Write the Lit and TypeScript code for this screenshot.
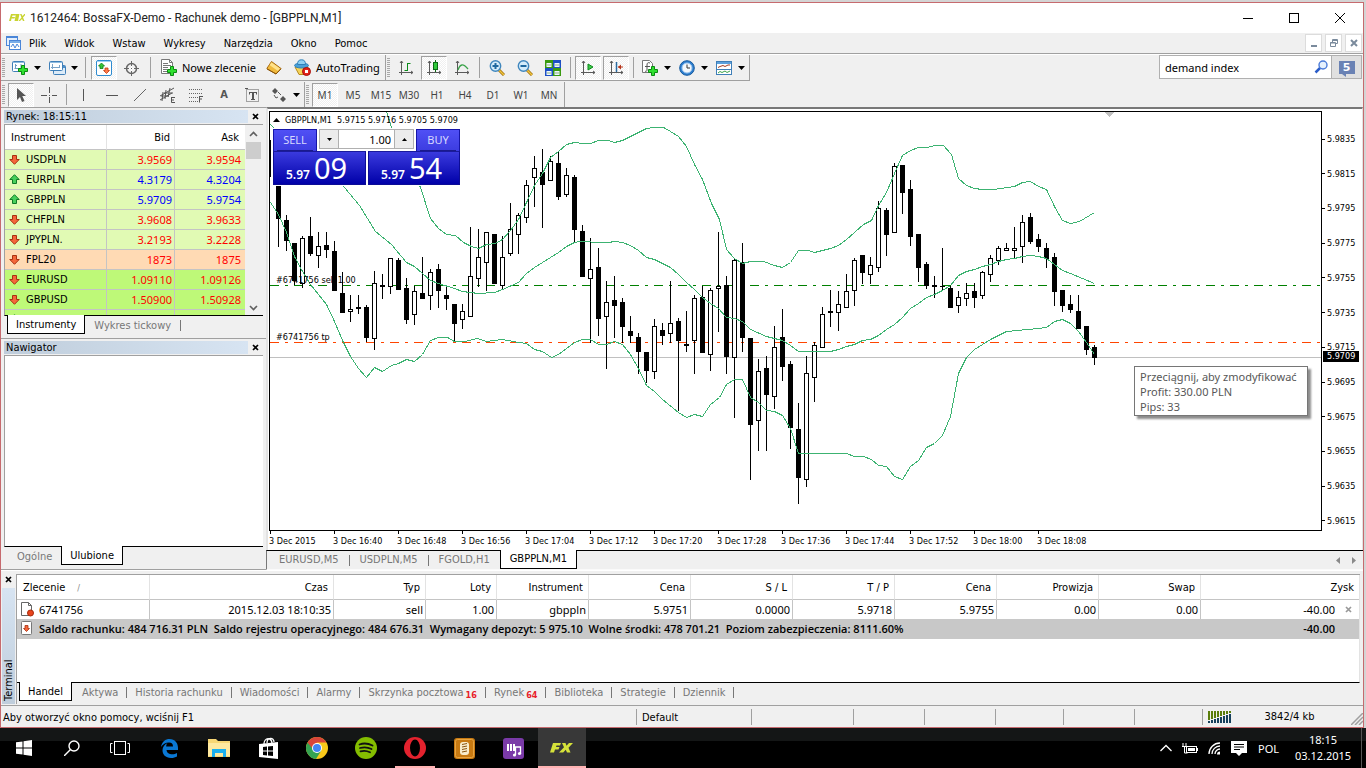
import { LitElement, html, svg, css, nothing } from "lit";
import { customElement } from "lit/decorators.js";
import { classMap } from "lit/directives/class-map.js";

/* ---------- shared glyphs ---------- */

const ico = (body: unknown, w = 16, h = 16) =>
  html`<svg width=${w} height=${h} viewBox="0 0 ${w} ${h}" aria-hidden="true">${body}</svg>`;

const axes = svg`<path d="M3.500 1v14M1 12.500h14M2 3l1.500-2L5 3M13 11l2 1.500L13 14" fill="none" stroke="#5a5a5a"/>`;

const icons = {
  newChart: ico(svg`<rect x=".5" y="1.500" width="12" height="10" rx="1" fill="#fff" stroke="#3f7fb8"/><path d="M1 2.500h11" stroke="#8fbbe0"/><path d="M3.500 4v5M2.500 8.500h7M3 5.500h2M9 4v5" stroke="#6f9cc4" fill="none"/><path d="M9.500 5.500h3v3h3v3h-3v3h-3v-3h-3v-3h3z" fill="#2fe02f" stroke="#0b8a12"/>`, 17, 16),
  profiles: ico(svg`<rect x="4.500" y="5.500" width="12" height="9" rx="1" fill="#dcebf8" stroke="#3f7fb8"/><path d="M5 7h11" stroke="#4d8fca" stroke-width="2"/><rect x=".5" y="1.500" width="13" height="9" rx="1" fill="#fff" stroke="#3f7fb8"/><path d="M1 2.500h12" stroke="#8fbbe0"/><path d="M3.500 4v5M2 7.500h9M10.500 5v3" stroke="#7aa3c8" fill="none"/>`, 17, 16),
  market: ico(svg`<rect x=".5" y=".5" width="15" height="15" rx="1.500" fill="#fff" stroke="#2f8bd0"/><path d="M1 1.500h14" stroke="#9fd0f2"/><path d="M5.500 3l3 3H7v2.500H4V6H2.500z" fill="#35c435" stroke="#0f7d16" stroke-width=".8"/><path d="M10.500 13.500l-3-3H9V8h3v2.500h1.500z" fill="#ff7a4a" stroke="#c43a10" stroke-width=".8"/>`),
  cross: ico(svg`<circle cx="7.500" cy="8.500" r="5" fill="none" stroke="#666" stroke-width="1.500"/><path d="M7.500 1v15M0 8.500h15" stroke="#666"/><path d="M7.500 6v5M5 8.500h5" stroke="#fff"/><path d="M7 8.500h1" stroke="#666"/>`),
  order: ico(svg`<path d="M.5.5h8l3 3v11H.5z" fill="#fff" stroke="#777"/><path d="M8.500.5v3h3" fill="none" stroke="#777"/><path d="M2 4.500h5M2 6.500h8M2 8.500h5M2 10.500h4M2 12.500h4" stroke="#777"/><path d="M9.500 7.500h3v3h3v3h-3v3h-3v-3h-3v-3h3z" fill="#2fe02f" stroke="#0b8a12"/>`, 16, 17),
  gold: ico(svg`<path d="M5.500 1.500L15 8.500 10 14 .8 8.500z" fill="#f0b93c" stroke="#a86a10"/><path d="M5.500 2.500L14 8.600 12 11 3.500 5z" fill="#ffe28a"/><path d="M1 9l9 5 5-5.200" fill="none" stroke="#8a5408"/>`),
  robot: ico(svg`<path d="M1 8h13l-2 7.500H5z" fill="#f4d35a" stroke="#b78a1e"/><ellipse cx="7.500" cy="6.500" rx="7" ry="2.500" fill="#4aa0d8" stroke="#2f80b8"/><path d="M3.500 5.500C3.500 2 5 .8 7.500.8s4 1.200 4 4.700z" fill="#8fd0f2" stroke="#2f80b8"/><circle cx="12.500" cy="12.500" r="4" fill="#e2231a" stroke="#a80f0a"/><rect x="11" y="11" width="3" height="3" fill="#fff"/>`, 17, 17),
  bars: ico(svg`${axes}<path d="M9.500 3v8M9.500 3.500h3M6.500 10.500h3" stroke="#0a8a1a" fill="none"/>`),
  candles: ico(svg`${axes}<path d="M9.500 0v12" stroke="#0a6a14"/><rect x="7.500" y="2.500" width="4" height="7" fill="#2fc93a" stroke="#0a6a14"/>`),
  line: ico(svg`${axes}<path d="M4 10c2-6 5-7 10-1" fill="none" stroke="#3aa34a" stroke-width="1.300"/>`),
  zoomIn: ico(svg`<path d="M10 10l5 5" stroke="#9a6a08" stroke-width="3"/><path d="M10 10l5 5" stroke="#f2c53c" stroke-width="1.500"/><circle cx="6.500" cy="6" r="5.200" fill="#d4ecfb" stroke="#3f86bd" stroke-width="1.400"/><path d="M6.500 3v6M3.500 6h6" stroke="#1f68a0" stroke-width="2"/>`),
  zoomOut: ico(svg`<path d="M10 10l5 5" stroke="#9a6a08" stroke-width="3"/><path d="M10 10l5 5" stroke="#f2c53c" stroke-width="1.500"/><circle cx="6.500" cy="6" r="5.200" fill="#d4ecfb" stroke="#3f86bd" stroke-width="1.400"/><path d="M3.500 6h6" stroke="#1f68a0" stroke-width="2"/>`),
  tile: ico(svg`<rect width="8" height="8" fill="#3a9a10"/><rect x="8" width="8" height="8" fill="#1d4fc4"/><rect y="8" width="8" height="8" fill="#1d4fc4"/><rect x="8" y="8" width="8" height="8" fill="#3a9a10"/><path d="M1.500 3h5v4h-5zM9.500 3h5v4h-5zM1.500 11h5v4h-5zM9.500 11h5v4h-5z" fill="#eef6ff"/><path d="M2 5h4M10 5h4M2 13h4M10 13h4" stroke="#8bb27a"/>`),
  scroll: ico(svg`${axes}<path d="M8 4v6l5-3z" fill="#3ecb4a" stroke="#0a8a1a"/>`),
  shift: ico(svg`${axes}<path d="M8.500 2v10" stroke="#2a6aa0" stroke-width="1.500"/><path d="M10 7h5" stroke="#b5341a"/><path d="M13 4.500L10 7l3 2.500z" fill="#b5341a"/>`),
  indicator: ico(svg`<path d="M.5.500h7l3 3v9H.5z" fill="#fff" stroke="#777"/><path d="M8 3C6 2 5 3 5 5v5c0 1-1 2-2 1M3 6.500h5" fill="none" stroke="#555"/><path d="M9.500 6.500h3v3h3v3h-3v3h-3v-3h-3v-3h3z" fill="#2fe02f" stroke="#0b8a12"/>`),
  clock: ico(svg`<circle cx="8" cy="8" r="7.300" fill="#2f7fd0" stroke="#155a9e"/><circle cx="8" cy="8" r="5" fill="#f4f8fc" stroke="#9cc6ee"/><path d="M8 4.500V8h3" fill="none" stroke="#333"/>`),
  template: ico(svg`<rect x=".5" y="1.500" width="15" height="13" fill="#fff" stroke="#3f7fb8"/><path d="M1 3h14" stroke="#5ba0dc" stroke-width="2"/><path d="M1 9.500h14" stroke="#3f7fb8"/><path d="M2 7.500l2-1 3-1 2 1 3-1.500 2 0" fill="none" stroke="#a03a20"/><path d="M2 13l2-1.500 2 1 3-1.500 2 1.500 3-1.500" fill="none" stroke="#3aa34a"/>`),
  pointer: ico(svg`<path d="M4 1v12l3-3 2 5 2.500-1-2.200-5H13z" fill="#555"/>`),
  hair: ico(svg`<path d="M8.500 0v6M8.500 10v6M0 8.500h6M11 8.500h5" stroke="#555"/><path d="M8 8.500h1" stroke="#555"/>`),
  vline: ico(svg`<path d="M7.500 2v12" stroke="#555"/>`),
  hline: ico(svg`<path d="M2 8.500h12" stroke="#555"/>`),
  diag: ico(svg`<path d="M2 14L14 2" stroke="#666"/>`),
  channel: ico(svg`<path d="M0 9L14 1M0 13L12 6M3 5l-1 9M6 3l-1 9M10 1L8 10M1 9h8M4 6h9" stroke="#555" fill="none"/><path d="M11.500 10v5.500M11.500 10.500H15M11.500 13H14M11.500 15.500H15" stroke="#555" fill="none"/>`),
  fib: ico(svg`<path d="M1 2.500h13M1 6.500h13M1 10.500h9M1 14.500h9" stroke="#666" stroke-dasharray="1 1"/><path d="M11.500 9v6.500M11.500 9.500H15M11.500 12H14" stroke="#555" fill="none"/>`),
  frameT: ico(svg`<rect x="2.500" y="2.500" width="12" height="12" fill="none" stroke="#555" stroke-dasharray="1 1"/><path d="M5 5.500h8M8.500 5v8M7 12.500h4M5.500 5v2.500M12.500 5v2.500" stroke="#555" fill="none"/><path d="M8 5h2v8H8z" fill="#555"/><path d="M1 1.500h3" stroke="#555"/>`),
  shapes: ico(svg`<path d="M4 1l3 3-3 3-3-3zM12 9l3 3-3 3-3-3z" fill="#555"/><path d="M3 8l2 3 2-1M7 5l3 3" stroke="#555" fill="none"/>`),
  appMenu: ico(svg`<rect x=".5" y=".5" width="11" height="9" fill="#e4effc" stroke="#4a86d8"/><path d="M1 1.500h10" stroke="#4a86d8"/><rect x="3.500" y="4.500" width="11" height="9" fill="#fff" stroke="#4a86d8"/><path d="M4 6h10" stroke="#7aaee8" stroke-width="2"/><path d="M5 11l2-3 2 4 2-4 2 3" fill="none" stroke="#4a86d8"/>`, 15, 14),
  upArrow: ico(svg`<path d="M5.500.7l4.700 4.800H7.500v4h-4v-4H.8z" fill="#46cf5a" stroke="#0f7a26" stroke-linejoin="round"/>`, 11, 11),
  downArrow: ico(svg`<path d="M5.500 10.300L.8 5.500h2.700v-4h4v4h2.700z" fill="#f4663a" stroke="#a83010" stroke-linejoin="round"/>`, 11, 11),
  cross8: ico(svg`<path d="M1 1l5 5M6 1L1 6" stroke="currentColor" stroke-width="1.700"/>`, 7, 7),
};

/* ---------- window caption and menu ---------- */

@customElement("window-header")
class WindowHeader extends LitElement {
  static styles = css`
    :host { display: block; }
    button { font: inherit; border: 0; padding: 0; background: none; display: flex; align-items: center; justify-content: center; }
    .caption { display: flex; height: 30px; background: #fff; align-items: center; }
    .logo { margin: 0 5px 0 8px; display: flex; }
    h1 { flex: 1; margin: 0; font: 400 12px/30px "Roboto", sans-serif; color: #222; }
    .caption button { width: 46px; height: 30px; }
    .menu { display: flex; height: 20px; align-items: center; border-bottom: 1px solid #a0a0a0; padding-left: 5px; }
    .menu .items { display: flex; flex: 1; margin: 0 0 0 8px; gap: 18px; font-size: 11px; }
    .child { box-sizing: border-box; width: 17px; height: 18px; border: 1px solid #dcdcdc; background: #fff; color: #7a8a9c; }
    .kids { display: flex; gap: 3px; padding-right: 1px; }
  `;
  render() {
    return html`
      <header class="caption">
        <span class="logo">${ico(svg`<path d="M2 0h5l-.5 1.500H3.500L3 3h3l-.5 1.500h-3L2 7H0zM7 0h3.500L9 7H5.500zM11 0h1.500l1 2 1.800-2H17l-3 3.400L15.500 7H14l-1-2-2 2H9.500l3-3.500z" fill="#c9d430"/>`, 16, 8)}</span>
        <h1>1612464: BossaFX-Demo - Rachunek demo - [GBPPLN,M1]</h1>
        <button aria-label="Minimalizuj">${ico(svg`<path d="M0 5.500h10" stroke="#000"/>`, 10, 10)}</button>
        <button aria-label="Maksymalizuj">${ico(svg`<rect x=".5" y=".5" width="9" height="9" fill="none" stroke="#000"/>`, 10, 10)}</button>
        <button aria-label="Zamknij">${ico(svg`<path d="M0 0l10 10M10 0L0 10" stroke="#000"/>`, 10, 10)}</button>
      </header>
      <nav class="menu">
        ${icons.appMenu}
        <div class="items">
          ${["Plik", "Widok", "Wstaw", "Wykresy", "Narzędzia", "Okno", "Pomoc"].map((t) => html`<button>${t}</button>`)}
        </div>
        <div class="kids">
          <button class="child" aria-label="Minimalizuj wykres">${ico(svg`<path d="M1 7h6" stroke="currentColor" stroke-width="2"/>`, 8, 8)}</button>
          <button class="child" aria-label="Przywróć wykres">${ico(svg`<path d="M2.500 3V.5h5v4H6M.5 3.500h5v4h-5zM2 1.500h5M0 4h5" fill="none" stroke="currentColor"/>`, 8, 8)}</button>
          <button class="child" aria-label="Zamknij wykres">${ico(svg`<path d="M1 1l6 6M7 1L1 7" stroke="currentColor" stroke-width="2"/>`, 8, 8)}</button>
        </div>
      </nav>
    `;
  }
}

/* ---------- toolbars ---------- */

@customElement("tool-bars")
class ToolBars extends LitElement {
  static styles = css`
    :host { display: block; border-top: 1px solid #fff; }
    .row { display: flex; justify-content: space-between; }
    .bar { display: flex; height: 25px; }
    .top .bar { border-bottom: 1px solid #a0a0a0; margin-bottom: 1px; }
    .group { display: flex; align-items: center; gap: 2px; padding: 0 2px 0 1px; border-right: 1px solid #a0a0a0; }
    .grip { width: 3px; height: 19px; margin-right: 1px; background: repeating-linear-gradient(#a8a8a8 0 1px, #f0f0f0 1px 2px); }
    .sep { width: 1px; height: 21px; margin: 0 2px; background: #a0a0a0; }
    .sep.wide { margin: 0 3px; }
    button { font: 11px "DejaVu Sans Condensed", "DejaVu Sans", sans-serif; color: #000; border: 0; padding: 0; background: none; box-sizing: border-box; width: 26px; height: 24px; display: flex; align-items: center; justify-content: center; }
    .split { width: 35px; padding: 0 2px 0 4px; justify-content: space-between; }
    .pressed { background: repeating-conic-gradient(#fff 0 25%, #f0f0f0 0 50%) 0 0 / 2px 2px; border: 1px solid; border-color: #a0a0a0 #fff #fff #a0a0a0; }
    .text { width: auto; gap: 5px; padding: 0 3px 0 5px; font: 11px "Noto Sans", sans-serif; white-space: nowrap; }
    .tf { color: #444; font: 10px "Noto Sans", sans-serif; padding-top: 1px; }
    .letter { color: #555; font-weight: 700; font-size: 11px; }
    .find { display: flex; height: 24px; margin-right: 1px; box-sizing: border-box; border: 1px solid #b0b0b0; background: #fff; }
    .find input { width: 146px; border: 0; padding: 0 0 0 5px; outline: 0; background: none; font: 11px "Noto Sans", sans-serif; color: #000; }
    .find button { width: 20px; height: 22px; }
    .find .badge { width: 30px; background: #e0e0e0; border-left: 1px solid #b0b0b0; }
    .bubble { position: relative; display: block; width: 16px; background: #6a82b4; color: #fff; font: 700 11px/13px "DejaVu Sans", sans-serif; text-align: center; }
    .bubble::after { content: ""; position: absolute; left: 3px; top: 13px; border: solid transparent; border-width: 0 0 3px 4px; border-top: 3px solid #6a82b4; border-bottom: 0; }
  `;
  btn(label: string, body: unknown, cls: Record<string, boolean> = {}) {
    return html`<button class=${classMap(cls)} aria-label=${label}>
      ${body}${cls.split ? ico(svg`<path d="M0 0h7L3.500 4z" fill="#000"/>`, 7, 4) : nothing}
    </button>`;
  }
  render() {
    const sep = html`<span class="sep"></span>`;
    const wide = html`<span class="sep wide"></span>`;
    const on = { pressed: true };
    const split = { split: true };
    return html`
      <div class="row top">
        <div class="bar">
          <div class="group">
            <span class="grip"></span>
            ${this.btn("Nowy wykres", icons.newChart, split)}${this.btn("Profile", icons.profiles, split)}${wide}
            ${this.btn("Rynek", icons.market, on)}${this.btn("Okno danych", icons.cross)}${wide}
            <button class="text">${icons.order}<span>Nowe zlecenie</span></button>
            ${this.btn("MetaEditor", icons.gold)}
            <button class="text">${icons.robot}<span>AutoTrading</span></button>
          </div>
          <div class="group">
            <span class="grip"></span>
            ${this.btn("Słupki", icons.bars)}${this.btn("Świece", icons.candles, on)}${this.btn("Linia", icons.line)}${sep}
            ${this.btn("Powiększ", icons.zoomIn)}${this.btn("Pomniejsz", icons.zoomOut)}${this.btn("Rozmieść okna", icons.tile)}${sep}
            ${this.btn("Autoprzewijanie", icons.scroll, on)}${this.btn("Przesunięcie", icons.shift, on)}${sep}
            ${this.btn("Wskaźniki", icons.indicator, split)}${this.btn("Okresy", icons.clock, split)}${this.btn("Szablony", icons.template, split)}
          </div>
        </div>
        <form class="find" @submit=${(e: Event) => e.preventDefault()}>
          <input type="text" aria-label="Szukaj" .value=${"demand index"} />
          <button aria-label="Szukaj">${ico(svg`<path d="M7 7L1.500 12.500" stroke="#2a5cc8" stroke-width="2.500"/><circle cx="9" cy="5" r="4" fill="#e6f1fd" stroke="#4a7ad8" stroke-width="1.400"/>`, 14, 14)}</button>
          <button class="badge" aria-label="Wiadomości"><span class="bubble">5</span></button>
        </form>
      </div>
      <div class="row">
        <div class="bar">
          <div class="group">
            <span class="grip"></span>
            ${this.btn("Kursor", icons.pointer, on)}${this.btn("Celownik", icons.hair)}${sep}
            ${this.btn("Linia pionowa", icons.vline)}${this.btn("Linia pozioma", icons.hline)}${this.btn("Linia trendu", icons.diag)}
            ${this.btn("Kanał", icons.channel)}${this.btn("Fibonacci", icons.fib)}
            ${this.btn("Tekst", html`<span class="letter">A</span>`)}${this.btn("Etykieta", icons.frameT)}
            ${this.btn("Strzałki", icons.shapes, split)}
          </div>
          <div class="group">
            <span class="grip"></span>
            ${["M1", "M5", "M15", "M30", "H1", "H4", "D1", "W1", "MN"].map(
              (t, i) => html`<button class=${classMap({ tf: true, pressed: i === 0 })}>${t}</button>`
            )}
          </div>
        </div>
      </div>
    `;
  }
}

/* ---------- left side panels ---------- */

const quotes: [string, string, string, boolean, string][] = [
  ["USDPLN", "3.9569", "3.9594", false, "pln"],
  ["EURPLN", "4.3179", "4.3204", true, "pln"],
  ["GBPPLN", "5.9709", "5.9754", true, "pln"],
  ["CHFPLN", "3.9608", "3.9633", false, "pln"],
  ["JPYPLN.", "3.2193", "3.2228", false, "pln"],
  ["FPL20", "1873", "1875", false, "fut"],
  ["EURUSD", "1.09110", "1.09126", false, "usd"],
  ["GBPUSD", "1.50900", "1.50928", false, "usd"],
  ["", "", "", true, "usd"],
];

const tabStyles = css`
  .tabs { display: flex; align-items: flex-start; font-size: 11px; color: #777; }
  .tabs button { font: inherit; color: inherit; border: 0; background: none; height: 18px; padding: 0 9px; line-height: 19px; white-space: nowrap; }
  .tabs .active { color: #000; background: #fff; border: 1px solid #000; border-top: 0; height: 19px; margin-top: -1px; padding: 0 8px; }
  .tabs .bar { width: 1px; height: 11px; margin-top: 4px; background: #777; }
`;

@customElement("side-panels")
class SidePanels extends LitElement {
  static styles = [tabStyles, css`
    :host { display: flex; flex-direction: column; width: 265px; flex: none; }
    .panel { border-top: 1px solid #a0a0a0; display: flex; flex-direction: column; padding: 2px 3px 0; }
    .market { height: 228px; flex: none; }
    .navigator { flex: 1; min-height: 0; border-bottom: 1px solid #a0a0a0; }
    .title { display: flex; align-items: center; height: 13px; margin-bottom: 1px; }
    h2 { flex: 1; margin: 0; padding-left: 2px; font: 400 11px/13px "DejaVu Sans Condensed", "DejaVu Sans", sans-serif; background: linear-gradient(90deg, #bfcddb, #d7e4f2); }
    .close { border: 0; padding: 0; background: none; display: flex; width: 15px; justify-content: center; color: #000; }
    .body { border-top: 1px solid #a0a0a0; border-left: 1px solid #a0a0a0; background: #fff; border-bottom: 1px solid #000; overflow: hidden; display: flex; }
    .market .body { height: 190px; }
    .navigator .body { flex: 1; }
    table { flex: 1; border-collapse: separate; border-spacing: 0; table-layout: fixed; }
    tr { height: 20px; }
    thead tr { height: 25px; }
    th, td { box-sizing: border-box; padding: 0 2px 0 0; text-align: right; font-weight: 400; border-right: 1px solid #c4c4c4; border-bottom: 1px solid #c4c4c4; height: 20px; }
    th { border-right-color: #e3e3e3; padding-right: 4px; height: 25px; }
    th:first-child { text-align: left; padding-left: 6px; }
    th:last-child { border-right: 0; padding-right: 6px; }
    td:last-child { border-right: 0; padding-right: 4px; }
    td:first-child { text-align: left; padding-left: 4px; }
    .sym { display: flex; align-items: center; gap: 6px; }
    .pln { background: #e1fab4; }
    .fut { background: #ffdab4; }
    .usd { background: #bef978; }
    .num { font-family: "Noto Sans", sans-serif; color: #f00; padding-bottom: 1px; }
    .rise { color: #00f; }
    .scroll { width: 18px; background: #f0f0f0; display: flex; flex-direction: column; align-items: center; padding: 6px 2px 4px 0; box-sizing: border-box; }
    .thumb { width: 15px; height: 17px; background: #cdcdcd; margin: 5px 0 auto; }
    .c1 { width: 102px; }
    .c2 { width: 68px; }
    .tabs { padding: 0 0 0 3px; }
    .navigator .tabs { height: 22px; padding-left: 4px; }
  `];
  render() {
    return html`
      <section class="panel market">
        <div class="title"><h2>Rynek: 18:15:11</h2><button class="close" aria-label="Zamknij">${icons.cross8}</button></div>
        <div class="body">
          <table>
            <colgroup><col class="c1" /><col class="c2" /><col /></colgroup>
            <thead><tr><th>Instrument</th><th>Bid</th><th>Ask</th></tr></thead>
            <tbody>
              ${quotes.map(([s, b, a, up, cls]) => html`<tr class=${cls}>
                <td><span class="sym">${up ? icons.upArrow : icons.downArrow}${s}</span></td>
                <td class=${classMap({ num: true, rise: up })}>${b}</td>
                <td class=${classMap({ num: true, rise: up })}>${a}</td>
              </tr>`)}
            </tbody>
          </table>
          <div class="scroll">
            ${ico(svg`<path d="M1 5l3.500-3.500L8 5" fill="none" stroke="#606060" stroke-width="1.600"/>`, 9, 6)}
            <span class="thumb"></span>
            ${ico(svg`<path d="M1 1l3.500 3.500L8 1" fill="none" stroke="#606060" stroke-width="1.600"/>`, 9, 6)}
          </div>
        </div>
        <div class="tabs"><button class="active">Instrumenty</button><button>Wykres tickowy</button><span class="bar"></span></div>
      </section>
      <section class="panel navigator">
        <div class="title"><h2>Nawigator</h2><button class="close" aria-label="Zamknij">${icons.cross8}</button></div>
        <div class="body"></div>
        <div class="tabs"><button>Ogólne</button><button class="active">Ulubione</button></div>
      </section>
    `;
  }
}

/* ---------- price chart ---------- */

/* One candle per minute: high, body top, body bottom, low, rising flag. */
const candles: number[][] = [
  [180,180,219,247,0],[215,220,241,251,0],[243,243,281,285,0],[236,238,284,288,1],[217,236,254,256,0],[232,246,256,268,1],[232,245,250,258,0],[241,251,291,291,0],
  [272,293,313,313,0],[295,309,312,322,1],[295,307,309,314,0],[305,307,338,342,0],[271,283,339,350,1],[274,285,287,299,0],[258,258,287,294,1],[258,260,290,290,0],
  [278,288,320,324,0],[286,291,315,325,1],[257,293,299,299,0],[269,272,296,310,1],[264,269,291,308,0],[286,295,299,310,0],[304,304,324,342,0],[304,311,320,329,1],
  [227,276,317,317,1],[229,257,279,287,1],[232,232,263,291,1],[234,234,284,284,0],[236,257,286,289,1],[203,229,254,256,1],[213,215,235,254,1],[180,185,218,223,1],
  [156,168,178,207,1],[149,172,185,228,0],[156,161,181,181,1],[152,163,197,200,0],[168,175,195,197,1],[175,177,230,242,0],[225,231,277,277,0],[238,269,279,343,1],
  [248,267,319,336,0],[281,302,317,369,1],[276,300,306,338,0],[298,302,327,343,0],[316,331,336,343,0],[333,337,352,374,0],[352,352,371,383,0],[319,326,372,379,1],
  [323,330,336,345,0],[281,323,334,343,1],[318,321,341,411,0],[311,344,346,352,0],[295,298,341,374,1],[286,297,353,353,0],[288,290,355,371,1],[232,286,289,332,1],
  [276,285,357,374,0],[258,260,358,418,1],[243,262,338,352,0],[338,338,425,480,0],[359,371,421,451,1],[356,368,395,451,0],[326,347,397,409,1],[309,337,367,381,0],
  [361,364,428,449,0],[403,429,478,504,0],[356,373,480,487,1],[342,345,378,402,1],[307,314,348,348,1],[290,311,313,327,0],[291,304,313,331,1],[274,291,308,308,1],
  [258,260,291,306,1],[255,255,273,284,0],[257,265,275,284,1],[201,208,268,272,1],[208,210,235,256,0],[163,166,233,233,1],[165,165,193,214,0],[180,189,237,246,0],
  [234,234,268,282,0],[262,264,286,289,0],[276,285,287,298,0],[248,286,287,290,0],[286,288,308,308,0],[291,297,306,313,1],[283,293,299,306,1],[283,291,298,308,0],
  [271,272,296,299,1],[255,258,275,282,1],[246,248,261,265,1],[243,248,251,251,1],[227,248,251,258,1],[215,222,247,263,1],[213,217,242,244,0],[234,239,247,252,0],
  [243,248,259,268,0],[253,257,292,306,0],[290,290,306,312,0],[295,304,310,313,0],[295,311,329,329,0],[326,326,350,355,0],[345,347,358,365,0],
];

const bands = [
  "386,111 391,127 420,187 430,218 438,228 446,234 455,235 463,242 471,246 478,248 486,244 495,243 502,239 510,230 518,219 526,202 534,185 542,173 550,157 558,151 566,144 574,142 582,143 590,143 598,140 608,140 614,142 622,140 630,136 646,128 654,127 663,127 670,131 678,136 686,146 694,164 702,179 711,203 719,219 726,249 734,258 742,263 750,261 763,261 774,265 782,267 790,262 798,250 808,250 814,252 830,248 838,245 846,239 854,232 863,224 871,220 878,205 886,192 894,173 902,155 910,150 918,147 927,147 934,145 943,145 951,154 958,178 966,185 974,188 982,189 993,189 1014,186 1022,182 1030,181 1038,186 1046,189 1054,206 1062,220 1070,223 1079,221 1094,212",
  "270,124 273,127 344,187 359,205 375,231 391,244 406,262 414,266 422,273 430,280 438,283 454,288 462,291 478,293 494,292 502,289 518,282 526,273 534,267 550,257 558,252 566,246 574,242 580,241 588,241 593,242 608,242 614,241 622,242 630,245 638,250 646,257 654,259 670,267 678,274 686,282 694,289 702,297 710,303 718,308 726,317 734,318 742,321 750,329 766,336 782,340 790,345 798,351 830,351 838,349 846,346 854,344 862,340 870,339 878,335 886,329 894,324 902,317 910,308 918,303 926,297 934,294 942,290 950,285 958,275 966,271 974,269 982,266 990,264 998,261 1006,259 1014,258 1022,256 1030,255 1038,256 1046,258 1054,264 1062,270 1070,273 1094,283",
  "270,202 278,214 286,232 294,256 302,271 310,284 318,294 326,304 334,321 342,340 350,356 358,368 366,377 374,367 382,371 391,365 398,363 406,359 414,361 422,354 430,340 438,337 447,337 454,341 464,341 477,338 486,341 502,339 518,342 526,343 534,349 542,351 551,357 558,354 574,342 582,339 590,339 598,344 606,344 614,341 622,344 630,354 638,368 646,385 654,391 662,399 678,412 686,417 694,414 702,416 710,404 719,397 726,384 734,379 742,379 750,397 758,402 766,410 774,411 782,415 790,428 798,453 846,453 854,456 863,456 871,459 878,465 886,466 894,476 902,479 910,466 918,460 926,447 934,443 942,435 950,416 958,373 966,357 974,349 990,339 1006,331 1038,328 1046,327 1054,321 1062,319 1070,323 1078,331 1086,342 1094,354",
];

const prices = ["5.9835", "5.9815", "5.9795", "5.9775", "5.9755", "5.9735", "5.9715", "5.9695", "5.9675", "5.9655", "5.9635", "5.9615"];
const times = ["2015", "16:40", "16:48", "16:56", "17:04", "17:12", "17:20", "17:28", "17:36", "17:44", "17:52", "18:00", "18:08"];

@customElement("price-chart")
class PriceChart extends LitElement {
  static styles = [tabStyles, css`
    :host { display: flex; flex-direction: column; flex: 1; min-width: 0; }
    .window { flex: 1; min-height: 0; display: grid; grid-template: minmax(0, 1fr) 17px / minmax(0, 1fr) 40px; background: #fff; border: solid; border-width: 2px 1px 0 2px; border-color: #787878 #e3e3e3; padding: 2px 0 2px 1px; font: 9px/12px "DejaVu Sans Condensed", "DejaVu Sans", sans-serif; }
    .plot { position: relative; display: grid; grid-template: minmax(0, 1fr) / minmax(0, 1fr); border: 1px solid #000; }
    .canvas { width: 100%; height: 100%; display: block; min-height: 0; }
    .prices { position: relative; display: flex; flex-direction: column; justify-content: space-between; padding: 22px 0 4px; }
    .price { display: flex; align-items: center; gap: 2px; }
    .price::before { content: ""; width: 3px; height: 1px; background: #000; }
    .mark { position: absolute; left: 1px; top: 240px; width: 36px; height: 11px; line-height: 11px; background: #000; color: #fff; text-indent: 4px; }
    .times { grid-column: 1 / 3; display: flex; }
    .time { flex: 0 0 64px; line-height: 14px; white-space: nowrap; }
    .time::before { content: ""; display: block; width: 1px; height: 3px; margin-left: 1px; background: #000; }
    .ticker { position: absolute; left: 3px; top: 2px; display: flex; align-items: center; gap: 5px; white-space: pre; }
    .trade { position: absolute; left: 2px; top: 16px; padding: 1px; background: #fff; width: 187px; display: grid; grid-template: 22px 34px / 93px 92px; column-gap: 2px; font-family: "Noto Sans", "Open Sans", sans-serif; color: #fff; }
    .trade .head { grid-column: 1 / 3; display: flex; gap: 2px; min-width: 0; }
    .side { border: 1px solid #1515a8; border-bottom: 0; background: linear-gradient(#5050f5, #3c3ce0); width: 44px; flex: none; box-sizing: border-box; padding: 0 3px; font: 11px "Noto Sans", sans-serif; color: #d8d8ff; }
    .side span { display: block; height: 21px; line-height: 20px; border-bottom: 1px solid #1a1a8c; box-sizing: border-box; }
    .vol { flex: 1; min-width: 0; display: flex; height: 20px; box-sizing: border-box; border: 1px solid #b0b0b0; background: #fff; }
    .vol button { width: 18px; flex: none; border: 0; padding: 0; background: #ececec; display: flex; align-items: center; justify-content: center; }
    .vol input { flex: 1; min-width: 0; border: solid #b0b0b0; border-width: 0 1px; padding: 0 3px 0 0; text-align: right; font: 11px "Noto Sans", sans-serif; color: #000; }
    .quote { border: 1px solid #0c0c96; border-top-color: #1a1a9c; background: linear-gradient(#3a3ade, #0000a8); display: flex; align-items: baseline; justify-content: flex-start; gap: 4px; font: 600 12px/32px "Noto Sans", sans-serif; color: #fff; padding: 0 0 0 12px; }
    .quote b { font-size: 29px; font-weight: 400; }
    .tip { position: absolute; left: 864px; top: 254px; padding: 2px 10px 1px 5px; background: #fff; border: 1px solid #767676; box-shadow: 3px 3px 2px rgba(0, 0, 0, 0.45); font: 11px/15px "Noto Sans", sans-serif; color: #575757; white-space: nowrap; }
    .foot { display: flex; justify-content: space-between; box-sizing: border-box; height: 20px; flex: none; border-top: 1px solid #000; border-left: 1px solid #787878; border-bottom: 1px solid #fafafa; }
    .foot .tabs { padding-left: 2px; }
    .foot .tabs button { padding: 0 10px; line-height: 18px; }
    .foot .tabs .active { height: 19px; padding: 0 9px; }
    .arrows { display: flex; align-items: center; gap: 12px; padding-right: 7px; }
  `];
  render() {
    return html`
      <div class="window">
        <div class="plot">
          <svg class="canvas" role="img" aria-label="GBPPLN M1" shape-rendering="crispEdges">
            <line x1="0" x2="100%" y1="245.500" y2="245.500" stroke="#c0c0c0" />
            <line x1="0" x2="100%" y1="173.500" y2="173.500" stroke="#008000" stroke-dasharray="9 6 3 6" />
            <line x1="0" x2="100%" y1="230.500" y2="230.500" stroke="#ff4500" stroke-dasharray="9 6 3 6" />
            <g transform="translate(-270 -112)">
              <rect x="270" y="140" width="1" height="37" />
              ${candles.map(([h, t, b, l, up], i) => {
                const x = 278 + i * 8;
                return svg`<rect x=${x} y=${h} width="1" height=${l - h} fill="#000" />${
                  up
                    ? svg`<rect x=${x - 1.5} y=${t + 0.5} width="4" height=${b - t - 1} fill="#fff" stroke="#000" />`
                    : svg`<rect x=${x - 2} y=${t} width="5" height=${b - t} fill="#000" />`
                }`;
              })}
              ${bands.map((p) => svg`<polyline points=${p} transform="translate(.5 .5)" fill="none" stroke="#3cb371" />`)}
              <path d="M1105 112h9l-4.500 5z" fill="#c0c0c0" />
            </g>
            <text x="6" y="171">#6741756 sell 1.00</text>
            <text x="6" y="228">#6741756 tp</text>
          </svg>
          <div class="ticker">${ico(svg`<path d="M0 4h7L3.500 0z" fill="#000"/>`, 7, 4)}<span>GBPPLN,M1  5.9715 5.9716 5.9705 5.9709</span></div>
          <div class="trade">
            <div class="head">
              <button class="side"><span>SELL</span></button>
              <div class="vol">
                <button aria-label="Mniej">${ico(svg`<path d="M0 0h5L2.500 3z" fill="#000"/>`, 5, 3)}</button>
                <input type="text" aria-label="Wolumen" .value=${"1.00"} />
                <button aria-label="Więcej">${ico(svg`<path d="M0 3h5L2.500 0z" fill="#000"/>`, 5, 3)}</button>
              </div>
              <button class="side"><span>BUY</span></button>
            </div>
            <button class="quote">5.97<b>09</b></button>
            <button class="quote">5.97<b>54</b></button>
          </div>
          <div class="tip">Przeciągnij, aby zmodyfikować<br />Profit: 330.00 PLN<br />Pips: 33</div>
        </div>
        <div class="prices">
          ${prices.map((p) => html`<span class="price">${p}</span>`)}
          <span class="mark">5.9709</span>
        </div>
        <div class="times">${times.map((t) => html`<span class="time">3 Dec ${t}</span>`)}</div>
      </div>
      <div class="foot">
        <div class="tabs">
          <button>EURUSD,M5</button><span class="bar"></span><button>USDPLN,M5</button><span class="bar"></span><button>FGOLD,H1</button><button class="active">GBPPLN,M1</button>
        </div>
        <div class="arrows">
          ${ico(svg`<path d="M4 0v7L0 3.500z" fill="#8a8a8a"/>`, 4, 7)}${ico(svg`<path d="M0 0v7l4-3.500z" fill="#8a8a8a"/>`, 4, 7)}
        </div>
      </div>
    `;
  }
}

/* ---------- terminal ---------- */

const columns = ["Zlecenie", "Czas", "Typ", "Loty", "Instrument", "Cena", "S / L", "T / P", "Cena", "Prowizja", "Swap", "Zysk"];
const order = ["2015.12.03 18:10:35", "sell", "1.00", "gbppln", "5.9751", "0.0000", "5.9718", "5.9755", "0.00", "0.00"];

@customElement("terminal-panel")
class TerminalPanel extends LitElement {
  static styles = [tabStyles, css`
    :host { display: flex; flex: none; height: 130px; padding: 3px 3px 1px 0; border-top: 1px solid #fff; border-bottom: 1px solid #a0a0a0; }
    .rail { width: 15px; flex: none; display: flex; flex-direction: column; align-items: center; padding-top: 2px; box-sizing: border-box; }
    .rail button { border: 0; padding: 0; background: none; display: flex; color: #000; margin-bottom: 5px; }
    .rail h2 { flex: 1; margin: 0; width: 13px; font: 400 11px/13px "DejaVu Sans Condensed", "DejaVu Sans", sans-serif; writing-mode: vertical-rl; transform: rotate(180deg); padding-top: 3px; box-sizing: border-box; background: linear-gradient(#bfcddb, #d7e4f2); }
    .main { flex: 1; min-width: 0; display: flex; flex-direction: column; border-left: 1px solid #a0a0a0; border-top: 1px solid #a0a0a0; }
    .list { flex: 1; background: #fff; border-bottom: 1px solid #000; border-right: 1px solid #e3e3e3; }
    table { width: 100%; table-layout: fixed; border-collapse: separate; border-spacing: 0; }
    th, td { box-sizing: border-box; font-weight: 400; text-align: right; padding: 0 2px 0 0; border-right: 1px solid #c4c4c4; white-space: nowrap; }
    th { height: 25px; padding-right: 5px; border-right-color: #e3e3e3; border-bottom: 1px solid #c4c4c4; }
    td { height: 19px; line-height: 15px; padding-bottom: 1px; font-family: "Noto Sans", sans-serif; }
    th:first-child { text-align: left; padding-left: 6px; }
    td:first-child { text-align: left; padding-left: 3px; }
    th:last-child, td:last-child { border-right: 0; }
    .cell { display: flex; align-items: center; gap: 5px; }
    .sort { color: #888; padding-left: 12px; font-size: 9px; }
    .gain { display: flex; align-items: center; justify-content: flex-end; gap: 10px; padding-right: 5px; color: #000; }
    .gain button { border: 0; padding: 0; background: none; display: flex; color: #999; }
    .total td { height: 20px; background: #c8c8c8; border: 0; font: 600 11px "Open Sans", sans-serif; white-space: pre; }
    .total td:last-child { padding-right: 24px; }
    .w1 { width: 133px; } .w2 { width: 184px; } .w3, .w5 { width: 92px; } .w4 { width: 71px; } .w6 { width: 102px; }
    .tabs { height: 21px; padding-left: 2px; }
    .tabs button { padding: 0 8px; line-height: 20px; }
    .tabs .active { margin-right: 2px; }
    .tabs sub { font: 700 9px/9px "DejaVu Sans Condensed", "DejaVu Sans", sans-serif; color: #e8202a; vertical-align: -2px; padding-left: 2px; }
  `];
  render() {
    const tabs: [string, string][] = [["Aktywa", ""], ["Historia rachunku", ""], ["Wiadomości", ""], ["Alarmy", ""], ["Skrzynka pocztowa", "16"], ["Rynek", "64"], ["Biblioteka", ""], ["Strategie", ""], ["Dziennik", ""]];
    return html`
      <div class="rail"><button aria-label="Zamknij">${icons.cross8}</button><h2>Terminal</h2></div>
      <div class="main">
        <div class="list">
          <table>
            <colgroup>
              <col class="w1" /><col class="w2" /><col class="w3" /><col class="w4" /><col class="w5" />
              <col class="w6" /><col class="w6" /><col class="w6" /><col class="w6" /><col class="w6" /><col class="w6" /><col />
            </colgroup>
            <thead><tr>${columns.map((c, i) => html`<th>${c}${i === 0 ? html`<span class="sort">/</span>` : nothing}</th>`)}</tr></thead>
            <tbody>
              <tr>
                <td><span class="cell">${ico(svg`<path d="M1.500.5h7l3 3v10h-10z" fill="#fff" stroke="#666"/><path d="M8.500.5v3h3" fill="none" stroke="#666"/><circle cx="10.500" cy="11" r="3" fill="#e8441c" stroke="#a82c0c"/>`, 14, 15)}6741756</span></td>
                ${order.map((v) => html`<td>${v}</td>`)}
                <td><span class="gain">-40.00<button aria-label="Zamknij zlecenie">${icons.cross8}</button></span></td>
              </tr>
              <tr class="total">
                <td colspan="11"><span class="cell">${ico(svg`<rect x="1.500" y=".5" width="10" height="13" rx="1" fill="#fff" stroke="#777"/><path d="M6.500 10.500l-3-3h1.500v-3h3v3h1.500z" fill="#f4663a" stroke="#a83010" stroke-width=".8"/>`, 14, 15)}<span>Saldo rachunku: 484 716.31 PLN  Saldo rejestru operacyjnego: 484 676.31  Wymagany depozyt: 5 975.10  Wolne środki: 478 701.21  Poziom zabezpieczenia: 8111.60%</span></span></td>
                <td>-40.00</td>
              </tr>
            </tbody>
          </table>
        </div>
        <div class="tabs">
          <button class="active">Handel</button>
          ${tabs.map(([t, n]) => html`<button>${t}${n ? html`<sub>${n}</sub>` : nothing}</button><span class="bar"></span>`)}
        </div>
      </div>
    `;
  }
}

/* ---------- status bar ---------- */

@customElement("status-bar")
class StatusBar extends LitElement {
  static styles = css`
    :host { display: flex; height: 21px; flex: none; align-items: center; }
    .hint { flex: 1; padding: 2px 0 0 2px; }
    .cell { border-left: 1px solid #a0a0a0; height: 16px; line-height: 18px; box-sizing: border-box; padding-left: 5px; }
    .a { width: 115px; } .b { width: 102px; } .c { width: 71px; } .d { width: 68px; }
    .net { width: 161px; display: flex; align-items: center; justify-content: space-between; }
    .kb { flex: 1; text-align: center; padding-right: 4px; }
    .grip { align-self: flex-end; display: flex; }
  `;
  render() {
    return html`
      <span class="hint">Aby otworzyć okno pomocy, wciśnij F1</span>
      <span class="cell a">Default</span><span class="cell b"></span><span class="cell c"></span><span class="cell c"></span>
      <span class="cell d"></span><span class="cell c"></span><span class="cell d"></span>
      <span class="cell net">
        ${ico([0, 1, 2, 3, 4, 5, 6, 7].map((i) => svg`<rect x=${i * 3} width="2" height=${Math.max(2, 9 - i)} fill="#5a7d0c"/><rect x=${i * 3} y=${Math.max(3, 10 - i)} width="2" height=${Math.min(9, 2 + i)} fill="#16405c"/>`), 24, 12)}
        <span class="kb">3842/4 kb</span>
        <span class="grip">${ico(svg`<path d="M0 12L12 0M4 12l8-8M8 12l4-4" stroke="#a0a0a0" stroke-width="1.500"/>`, 12, 12)}</span>
      </span>
    `;
  }
}

/* ---------- task bar ---------- */

const taskIcons: [string, unknown][] = [
  ["Microsoft Edge", ico(svg`<path d="M1 9C2 3.500 5.500 1 9.500 1 15 1 18 5 18 10v2H6.500c.3 3 3 4.200 5.500 4.200 2 0 3.800-.6 5-1.300v3.600C15.500 19.400 13.500 20 11 20 5.500 20 2.500 16.500 2.500 12.300c0-3.300 2-6 5-7.300C6.500 6 6.200 7.500 6.200 8.600H13C13 6 11.800 4.500 9 4.500 5.500 4.500 2.500 6.500 1 9z" fill="#0a78d4"/>`, 20, 21)],
  ["Eksplorator plików", ico(svg`<path d="M0 1h8l2 2h12v16H0z" fill="#f8d775"/><path d="M0 5h22v13H0z" fill="#ffe9a0"/><path d="M4 11h14v8h-3v-4H7v4H4z" fill="#1cb0ee"/>`, 22, 20)],
  ["Sklep", ico(svg`<path d="M1 7l19-2v17L1 20z" fill="#fff"/><path d="M6 7c0-7 8-7 8 0M9 6c0-6 7-6 7-1" fill="none" stroke="#fff" stroke-width="1.300"/><path d="M5 10l4-.4v4H5zM10 9.500l5-.5v4.600h-5zM5 14.500h4v4l-4-.4zM10 14.500h5v4.600l-5-.5z" fill="#000"/>`, 21, 23)],
  ["Google Chrome", ico(svg`<circle cx="11" cy="11" r="11" fill="#f9c81a"/><path d="M1.500 5.500A11 11 0 0 0 10 22l5-8-4-3z" fill="#35a352"/><path d="M1.500 5.500A11 11 0 0 1 20.500 5.500H11L6 11z" fill="#d8453a"/><circle cx="11" cy="11" r="5" fill="#fff"/><circle cx="11" cy="11" r="4" fill="#4285f4"/>`, 22, 22)],
  ["Spotify", ico(svg`<circle cx="11" cy="11" r="11" fill="#84bd00"/><path d="M4.500 7.500c4-1.500 9-1 13 1M5 11c4-1.200 8-.8 11.500 1M5.500 14.300c3-.8 6.500-.6 9.500 1" fill="none" stroke="#111" stroke-width="1.800" stroke-linecap="round"/>`, 22, 22)],
  ["Opera", ico(svg`<ellipse cx="11" cy="11" rx="11" ry="11" fill="#e4222e"/><ellipse cx="11" cy="11" rx="5" ry="8.500" fill="#000"/>`, 22, 22)],
  ["Notatnik", ico(svg`<rect width="21" height="21" rx="3" fill="#c87a12"/><rect x="1.500" y="1.500" width="18" height="18" rx="2" fill="none" stroke="#e8a440"/><rect x="6" y="4" width="9" height="13" rx="3" fill="#f8eccb"/><path d="M8 6.500l5-1M8 9l5-1M8 11.500l5-1M8 14l5-1" stroke="#8a5410"/>`, 21, 21)],
  ["Multimedia", ico(svg`<rect width="21" height="21" rx="3" fill="#7a3aa8"/><path d="M4 6h8v7H4z" fill="#fff"/><path d="M6.500 6v7M9.500 6v7" stroke="#7a3aa8"/><path d="M12.500 17V9h5v7" fill="none" stroke="#fff" stroke-width="1.300"/><circle cx="11.500" cy="17" r="1.600" fill="#fff"/><circle cx="16.500" cy="15.500" r="1.600" fill="#fff"/>`, 21, 21)],
  ["BossaFX", ico(svg`<path d="M3 1h8l-1 2.500H6.500L6 5h3.500l-1 2.500H5L4 10.500H0z" fill="#d6e23a"/><path d="M12 1h3.500l1 2.800L19 1h4l-4.500 4.800 2 4.700H17l-1.200-2.800-2.600 2.800H9l5-5.200z" fill="#d6e23a"/>`, 24, 12)],
];

@customElement("task-bar")
class TaskBar extends LitElement {
  static styles = css`
    :host { display: flex; height: 40px; flex: none; background: linear-gradient(#141616 13px, #000 13px); color: #fff; }
    button { width: 48px; border: 0; padding: 0; background: none; display: flex; align-items: center; justify-content: center; box-sizing: border-box; }
    .apps { display: flex; gap: 1px; flex: 1; padding-left: 2px; }
    .open { background: linear-gradient(#ffb3b3, #ffb3b3) center bottom / 40px 2px no-repeat; }
    .current { background: linear-gradient(#ffb3b3, #ffb3b3) center bottom / 48px 2px no-repeat #383838; }
    .tray { display: flex; align-items: center; gap: 10px; font: 12px "Noto Sans", sans-serif; padding-right: 8px; border-right: 1px solid #555; margin-right: 4px; }
    .lang { padding-left: 1px; font-size: 11px; }
    .clock { font-size: 11px; line-height: 16px; text-align: center; width: 60px; padding-left: 4px; }
  `;
  render() {
    return html`
      <button aria-label="Start">${ico(svg`<path d="M0 2.300l6.500-.9v6.100H0zM7.500 1.200L16 0v7.500H7.500zM0 8.500h6.500v6.100L0 13.700zM7.500 8.500H16V16l-8.500-1.200z" fill="#fff"/>`)}</button>
      <button aria-label="Szukaj">${ico(svg`<circle cx="10" cy="6" r="5" fill="none" stroke="#fff" stroke-width="1.400"/><path d="M6.500 9.500L0 16" stroke="#fff" stroke-width="1.400"/>`)}</button>
      <button aria-label="Widok zadań">${ico(svg`<rect x="4.500" y=".5" width="11" height="13" fill="none" stroke="#fff"/><path d="M2.500 2.500H.5v9h2M17.500 2.500h2v9h-2" fill="none" stroke="#fff"/>`, 20, 14)}</button>
      <div class="apps">
        ${taskIcons.map(([name, g], i) => html`<button class=${classMap({ open: i === 5, current: i === 8 })} aria-label=${name}>${g}</button>`)}
      </div>
      <div class="tray">
        ${ico(svg`<path d="M.5 7L6 1.500 11.500 7" fill="none" stroke="#fff" stroke-width="1.300"/>`, 12, 8)}
        ${ico(svg`<rect x="4.500" y="3.500" width="10" height="6" fill="none" stroke="#fff"/><path d="M15.500 5v3M1 0v3M4 0v3M0 3.500h5M2.500 4v6h3" stroke="#fff" fill="none"/><rect x="6" y="5" width="7" height="3" fill="#fff"/>`, 16, 11)}
        ${ico(svg`<path d="M1 12A11 11 0 0 1 12 1M4 12a8 8 0 0 1 8-8M7 12a5 5 0 0 1 5-5" fill="none" stroke="#fff" stroke-width="1.300"/><path d="M9 12.500a3 3 0 0 1 3-3v3z" fill="#fff"/>`, 13, 13)}
        ${ico(svg`<path d="M0 0h16v12h-5l-3 3-3-3H0z" fill="#fff"/><path d="M3 3.500h10M3 6h10M3 8.500h6" stroke="#000"/>`, 16, 15)}
        <span class="lang">POL</span>
        <span class="clock">18:15<br />03.12.2015</span>
      </div>
    `;
  }
}

/* ---------- shell ---------- */

@customElement("app-root")
class AppRoot extends LitElement {
  static styles = css`
    :host { display: flex; flex-direction: column; height: 100vh; min-height: 600px; background: #d4d4d4; font: 11px "DejaVu Sans Condensed", "DejaVu Sans", sans-serif; color: #000; }
    .window { flex: 1; min-height: 0; display: flex; flex-direction: column; margin: 2px 2px 0 0; border: 1px solid #c66a6e; background: #f0f0f0; }
    .work { flex: 1; min-height: 0; display: flex; }
  `;
  render() {
    return html`
      <div class="window">
        <window-header></window-header>
        <tool-bars></tool-bars>
        <main class="work"><side-panels></side-panels><price-chart></price-chart></main>
        <terminal-panel></terminal-panel>
        <status-bar></status-bar>
      </div>
      <task-bar></task-bar>
    `;
  }
}
